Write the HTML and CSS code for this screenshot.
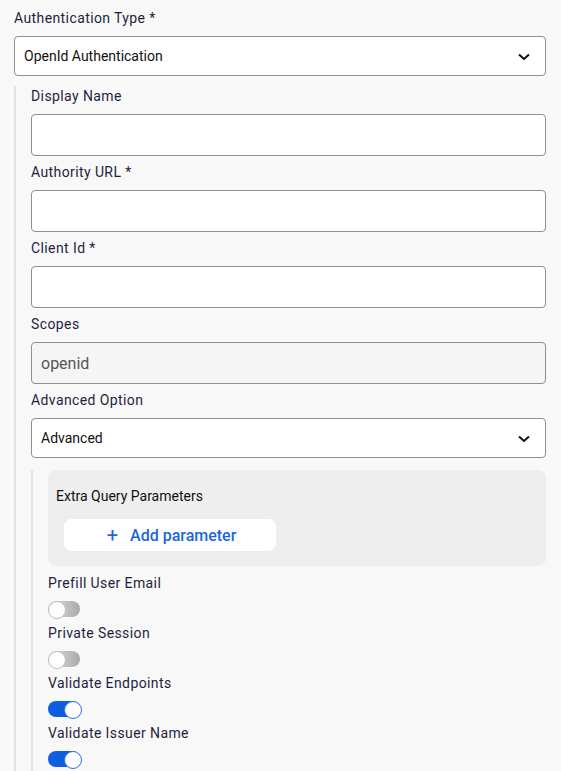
FILE: index.html
```html
<!DOCTYPE html>
<html lang="en">
<head>
<meta charset="utf-8">
<title>Authentication</title>
<link rel="stylesheet" href="styles.css">
</head>
<body>
<div class="form">
  <div class="field">
    <label class="label">Authentication Type *</label>
    <div class="select">
      <span>OpenId Authentication</span>
      <svg class="chev" width="12" height="8" viewBox="0 0 12 8"><path d="M1 1.5 L6 6 L11 1.5" fill="none" stroke="#111" stroke-width="2"/></svg>
    </div>
  </div>
  <div class="nested">
    <div class="field">
      <label class="label">Display Name</label>
      <div class="input"></div>
    </div>
    <div class="field">
      <label class="label">Authority URL *</label>
      <div class="input"></div>
    </div>
    <div class="field">
      <label class="label">Client Id *</label>
      <div class="input"></div>
    </div>
    <div class="field">
      <label class="label">Scopes</label>
      <div class="input disabled">openid</div>
    </div>
    <div class="field">
      <label class="label">Advanced Option</label>
      <div class="select">
        <span>Advanced</span>
        <svg class="chev" width="12" height="8" viewBox="0 0 12 8"><path d="M1 1.5 L6 6 L11 1.5" fill="none" stroke="#111" stroke-width="2"/></svg>
      </div>
    </div>
    <div class="nested inner">
      <div class="params">
        <div class="params-title">Extra Query Parameters</div>
        <button class="add-btn"><span class="plus">+</span>Add parameter</button>
      </div>
      <div class="toggle-row">
        <label class="label">Prefill User Email</label>
        <span class="toggle"></span>
      </div>
      <div class="toggle-row">
        <label class="label">Private Session</label>
        <span class="toggle"></span>
      </div>
      <div class="toggle-row">
        <label class="label">Validate Endpoints</label>
        <span class="toggle on"></span>
      </div>
      <div class="toggle-row">
        <label class="label">Validate Issuer Name</label>
        <span class="toggle on"></span>
      </div>
    </div>
  </div>
</div>
</body>
</html>
```
FILE: styles.css
```css
* { box-sizing: border-box; }
html, body { margin: 0; padding: 0; }
body {
  background: #f8f8f8;
  font-family: Roboto, "Liberation Sans", sans-serif;
  font-size: 14px;
  color: #1f1f3d;
  overflow: hidden;
  height: 771px;
}
.form {
  padding: 8px 15px 0 14px;
}
.field {
  display: flex;
  flex-direction: column;
  gap: 8px;
  margin-bottom: 6px;
}
.label {
  display: block;
  line-height: 20px;
  font-size: 14px;
  letter-spacing: 0.4px;
  color: #1f1f3d;
}
.select {
  height: 40px;
  background: #fff;
  border: 1px solid #8f8f8f;
  border-radius: 4px;
  display: flex;
  align-items: center;
  justify-content: space-between;
  padding: 0 15px 0 9px;
  font-size: 14px;
  color: #111;
}
.chev { display: block; margin-top: 1px; }
.input {
  height: 42px;
  background: #fff;
  border: 1px solid #8f8f8f;
  border-radius: 4px;
  padding: 0 9px;
  display: flex;
  align-items: center;
  font-size: 16px;
}
.input.disabled {
  background: #f5f5f5;
  color: #555;
}
.nested {
  margin-top: 10px;
  border-left: 2px solid #e2e2e2;
  padding-left: 15px;
}
.nested.inner {
  margin-top: 12px;
  padding-bottom: 20px;
}
.params {
  background: #eeeeee;
  border-radius: 8px;
  padding: 16px 16px 15px 8px;
  margin-bottom: 7px;
}
.params-title {
  line-height: 20px;
  color: #111;
  margin-bottom: 13px;
}
.add-btn {
  margin-left: 8px;
  width: 212px;
  height: 32px;
  border: none;
  background: #fff;
  border-radius: 8px;
  color: #1a66e0;
  font-family: Roboto, "Liberation Sans", sans-serif;
  font-size: 16px;
  font-weight: 500;
  display: flex;
  align-items: center;
  justify-content: center;
  padding: 0 0 0 3px;
}
.plus {
  font-size: 20px;
  font-weight: 400;
  margin-right: 12px;
  line-height: 1;
}
.toggle-row {
  display: flex;
  flex-direction: column;
  align-items: flex-start;
  gap: 8px;
  margin-bottom: 6px;
}
.toggle {
  position: relative;
  display: block;
  width: 32px;
  height: 16px;
  border-radius: 8px;
  background: linear-gradient(to right, #e4e4e4, #a9a9a9);
}
.toggle::after {
  content: "";
  position: absolute;
  left: 0;
  top: 0;
  width: 16px;
  height: 16px;
  border-radius: 50%;
  background: #fff;
  border: 1px solid #bdbdbd;
}
.toggle.on {
  background: #0d5ee0;
}
.toggle.on::after {
  left: 16px;
  border-color: #2f6fe0;
}
```
